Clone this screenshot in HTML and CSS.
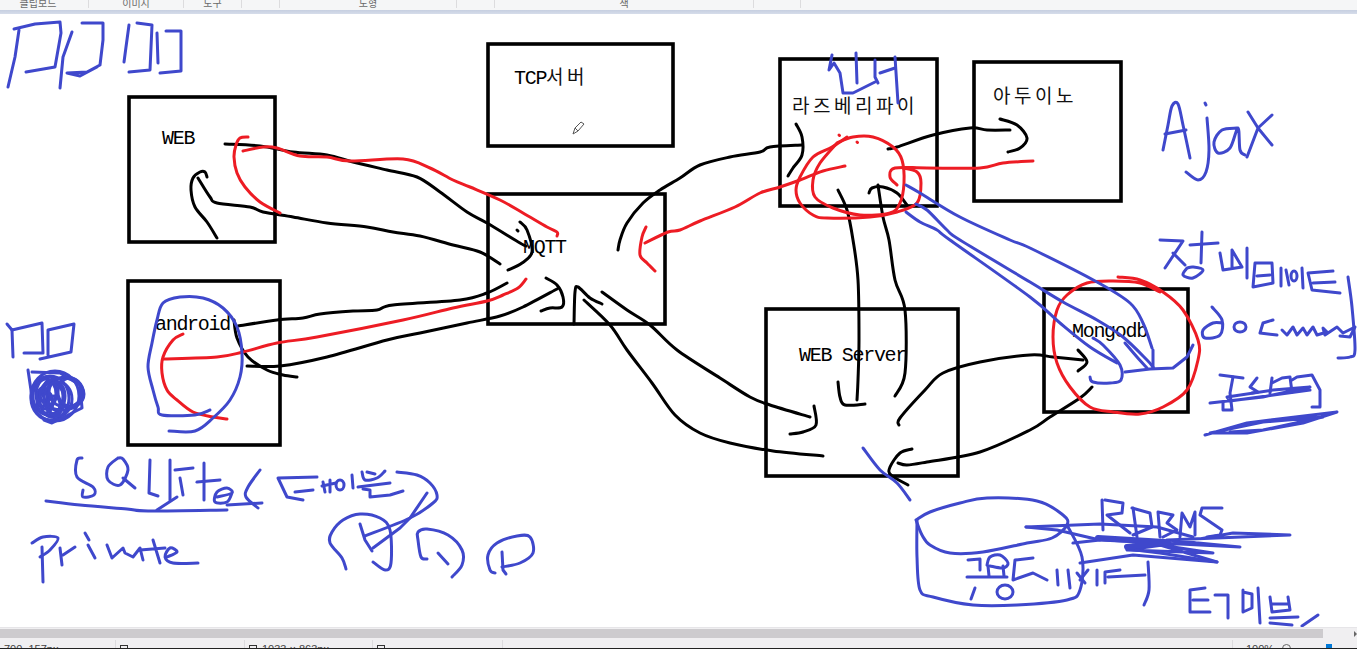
FILE: index.html
```html
<!DOCTYPE html>
<html lang="ko">
<head>
<meta charset="utf-8">
<title>그림판</title>
<link rel="stylesheet" href="styles.css">
</head>
<body>
<div class="app">
  <header class="ribbon">
    <div class="group g-clip"><span>클립보드</span></div>
    <div class="group g-image"><span>이미지</span></div>
    <div class="group g-tools"><span>도구</span></div>
    <div class="group g-brush"></div>
    <div class="group g-shape"><span>도형</span></div>
    <div class="group g-size"></div>
    <div class="group g-color"><span>색</span></div>
    <div class="group g-edit"></div>
  </header>
  <div class="band"></div>
  <main class="canvas">
    <svg class="sheet" viewBox="0 14 1357 613" width="1357" height="613">
      <g class="boxes">
        <rect x="129" y="97" width="146" height="145"/>
        <rect x="128" y="281" width="152" height="164"/>
        <rect x="488" y="44" width="185" height="102"/>
        <rect x="488" y="194" width="177" height="130"/>
        <rect x="780" y="59" width="157" height="147"/>
        <rect x="974" y="62" width="147" height="139"/>
        <rect x="766" y="309" width="192" height="167"/>
        <rect x="1044" y="289" width="144" height="123"/>
      </g>
      <g class="labels">
        <text x="514" y="84">TCP<tspan class="ko">서버</tspan></text>
        <text x="162" y="144">WEB</text>
        <text x="155" y="330">android</text>
        <text x="523" y="253">MQTT</text>
        <text x="799" y="361">WEB Server</text>
        <text x="1072" y="337">Mongodb</text>
        <text class="ko" x="792" y="113">라즈베리파이</text>
        <text class="ko" x="993" y="103">아두이노</text>
      </g>
      <path class="cursor" d="M573 134 L575 128 L581 122 L584 124 L578 131 Z M575 128 L578 131"/>

      <!-- black arrows -->
      <g class="k">
        <path class="curve" d="M225 144 L260 146 293 152 327 155 353 162 387 170 417 177 440 192 467 212 487 223 520 243 526 246"/>
        <path class="curve" d="M207 177 L205 172 200 172 193 178 191 190 195 207 207 222 217 238"/>
        <path class="curve" d="M198 178 L210 197 217 203 250 207 263 212 293 217 327 223 367 227 393 232 420 236 453 245 480 252 500 264"/>
        <path class="curve" d="M520 222 L527 230 532 252 522 263 508 270"/>
        <path d="M517 230 L518 231"/>
        <path class="curve" d="M618 250 L620 240 627 223 643 203 660 190 680 178 700 165 730 157 760 152 770 147 802 145"/>
        <path class="curve" d="M796 124 L802 137 802 155 793 168 788 176"/>
        <path class="curve" d="M888 149 L897 147 933 135 970 128 987 130 1010 130"/>
        <path class="curve" d="M1000 119 L1017 125 1027 138 1020 148 1008 152"/>
        <path class="curve" d="M838 190 L847 210 853 240 858 280 859 340 858 380 857 400"/>
        <path class="curve" d="M838 382 L840 397 845 405 865 404"/>
        <path class="curve" d="M869 193 L872 188 883 187 897 193 907 205"/>
        <path class="curve" d="M878 185 L883 217 889 240 895 280 905 310 905 373 895 396"/>
        <path class="curve" d="M899 425 L900 418 925 390 943 373 980 362 1030 355 1053 357 1083 360"/>
        <path class="curve" d="M1078 350 L1087 362 1078 371"/>
        <path class="curve" d="M1092 387 L1080 398 1050 417 1030 430 980 452 927 462 907 465 898 463"/>
        <path class="curve" d="M912 449 L900 453 890 467 891 475 908 485"/>
        <path class="curve" d="M602 292 L627 310 650 325 677 350 720 378 750 397 770 405 810 417"/>
        <path class="curve" d="M814 406 L816 425 803 432 790 434"/>
        <path class="curve" d="M584 300 L610 325 627 350 652 383 675 415 700 433 730 443 773 451 823 456"/>
        <path class="curve" d="M574 324 L575 292 578 287 590 298 602 304"/>
        <path class="curve" d="M238 326 L277 320 303 318 320 314 353 311 377 310 393 305 460 300 487 293 507 283"/>
        <path class="curve" d="M234 320 L237 338 248 357 267 370 283 375 297 377"/>
        <path class="curve" d="M247 366 L280 366 327 357 387 340 420 333 467 323 500 316 523 307 557 289"/>
        <path class="curve" d="M546 278 L557 285 563 297 562 307 550 308 541 311"/>
      </g>

      <!-- red arrows -->
      <g class="r">
        <path class="curve" d="M248 137 L240 138 236 145 234 157 237 173 245 187 260 202 280 213"/>
        <path class="curve" d="M243 151 L263 147 277 148 300 156 327 157 350 161 403 159 430 168 453 180 470 187 500 200 523 213 547 227 557 232 557 236"/>
        <path class="curve" d="M646 227 L642 237 640 255 647 263 655 271"/>
        <path class="curve" d="M645 243 L668 232 680 230 700 221 735 207 760 193 780 187 800 180 823 171 845 166"/>
        <path class="curve" d="M847 137 L832 147 813 157 800 177 796 190 800 203 813 215 827 218 870 217 897 212 917 203 921 183 917 172 903 168"/>
        <path class="curve" d="M837 143 L820 163 813 180 815 197 833 208 860 215 890 213 900 203 904 183 902 160 893 147 873 137 853 137 837 143"/>
        <path class="curve" d="M897 185 L890 177 895 168 927 168 980 168 1003 163 1033 161"/>
        <path d="M839 135 L839.5 135.5 M857 142 L857.5 142.5"/>
        <path class="curve" d="M1118 277 L1140 280 1163 292 1183 310 1198 340 1198 360 1187 390 1163 407 1140 414 1113 412 1090 407 1070 387 1057 363 1053 337 1057 310 1067 295 1087 283 1113 281 1140 283 1160 292"/>
        <path class="curve" d="M183 334 L173 340 163 357 162 373 167 390 177 400 193 412 213 417 227 419"/>
        <path class="curve" d="M163 359 L217 357 243 352 277 343 317 337 403 320 453 308 487 301 503 295 518 288 526 279"/>
      </g>

      <!-- blue lines and handwriting -->
      <g class="b">
        <path class="curve" d="M906 185 L920 193 960 217 1010 240 1030 248 1097 282 1130 303 1143 323 1152 348"/>
        <path class="curve" d="M916 204 L927 210 947 230 960 240 1030 282 1063 302 1097 320 1123 337 1147 360 1153 367"/>
        <path class="curve" d="M906 212 L920 222 937 230 950 240 1030 297 1060 323 1090 347 1117 363"/>
        <path class="curve" d="M1093 338 L1103 345 1120 365 1121 380 1110 383 1093 382 1090 377"/>
        <path class="curve" d="M1125 343 L1137 357 1147 368"/>
        <path d="M1153 350 L1153 368 M1125 372 L1150 369 1173 368 1187 357 1193 345"/>
        <path class="curve" d="M863 448 L880 470 897 483 910 500"/>
        <path class="curve" d="M210 410 L195 415 162 415 158 407 153 390 148 367 152 343 157 320 163 303 180 297 203 298 223 308 237 327 242 353 240 377 230 400 213 418 195 431 169 431"/>

        <!-- top-left -->
        <path d="M14 29 L35 24 60 22 61 33 55 67 26 72"/>
        <path d="M19 30 L15 57 8 87"/>
        <path d="M82 23 L103 23 103 40 100 65 87 72 67 73 80 76 97 67"/>
        <path d="M72 32 L63 57 60 88"/>
        <path d="M129 25 L126 47 124 62"/>
        <path d="M137 23 L152 25 150 70 129 72"/>
        <path d="M166 31 L181 31 181 71 160 73"/>
        <path d="M157 33 L158 63"/>

        <!-- sensor -->
        <path d="M832 55 L829 70 834 63 840 73 843 93 853 93 875 82"/>
        <path d="M856 53 L857 83"/>
        <path d="M875 60 L875 77 878 83"/>
        <path d="M880 73 L895 68"/>
        <path d="M895 57 L898 103"/>

        <!-- Ajax -->
        <path class="curve" d="M1163 150 L1168 125 1172 106 1178 104 1183 125 1190 158"/>
        <path d="M1165 134 L1186 130"/>
        <path d="M1205 103 L1206 105"/>
        <path class="curve" d="M1207 118 L1209 150 1206 172 1198 180 1186 172"/>
        <path class="curve" d="M1237 128 L1222 130 1214 142 1218 153 1230 148 1238 128 1240 150 1245 155"/>
        <path d="M1248 112 L1258 128 1272 145 M1272 115 L1258 128 1247 157"/>

        <!-- small squares and scribble -->
        <path d="M7 324 L12 330 42 323 43 353 24 353"/>
        <path d="M12 330 L13 357"/>
        <path d="M48 355 L48 330 74 324 71 352 40 359"/>
        <path d="M28 370 L32 397"/>
        <ellipse cx="55" cy="396" rx="24" ry="25"/>
        <ellipse cx="50" cy="398" rx="19" ry="22"/>
        <ellipse cx="48" cy="396" rx="15" ry="19"/>
        <ellipse cx="52" cy="400" rx="12" ry="17"/>
        <ellipse cx="46" cy="394" rx="10" ry="15"/>
        <ellipse cx="50" cy="392" rx="7" ry="12"/>
        <ellipse cx="45" cy="402" rx="8" ry="11"/>
        <ellipse cx="56" cy="396" rx="9" ry="14"/>
        <ellipse cx="43" cy="397" rx="6" ry="9"/>
        <ellipse cx="54" cy="405" rx="6" ry="9"/>
        <ellipse cx="62" cy="394" rx="22" ry="16"/>
        <ellipse cx="66" cy="392" rx="17" ry="15"/>
        <ellipse cx="70" cy="392" rx="12" ry="14"/>
        <ellipse cx="58" cy="399" rx="14" ry="17"/>
        <path d="M32 372 L60 373 80 385 82 408 52 423 44 420"/>

        <!-- SQLite -->
        <path class="curve" d="M82 458 L77 460 77 477 93 487 94 495 83 497 83 490"/>
        <path class="curve" d="M118 458 L108 467 108 480 120 485 128 470 123 459 118 458"/>
        <path d="M123 478 L135 488"/>
        <path d="M150 460 L149 493 158 496"/>
        <path d="M170 460 L170 500"/>
        <path d="M180 478 L183 495"/>
        <path d="M175 470 L193 468"/>
        <path d="M204 463 L204 500"/>
        <path d="M197 482 L220 480"/>
        <path class="curve" d="M217 497 L232 493 227 488 217 492 215 502 227 502 232 493"/>
        <path class="curve" d="M260 470 L248 487 246 497 258 508"/>
        <path class="curve" d="M46 501 L80 505 127 509 148 511 227 510"/>
        <path d="M157 510 L177 497"/>
        <path d="M227 505 L262 503"/>

        <!-- table -->
        <path d="M317 477 L278 478 287 497 303 500"/>
        <path d="M295 492 L313 490"/>
        <path d="M323 482 L325 492"/>
        <path d="M330 480 L330 492 M322 486 L336 483"/>
        <ellipse cx="340" cy="485" rx="4" ry="5"/>
        <path d="M352 475 L353 488"/>
        <path class="curve" d="M362 472 L365 480 377 478 385 471"/>
        <path d="M367 472 L375 474"/>
        <path d="M358 487 L390 483"/>
        <path d="M363 489 L370 490 370 497 390 495 403 491"/>
        <path class="curve" d="M397 472 L417 475 430 483 437 495 433 503 410 518 365 536"/>
        <path d="M427 493 L410 518 400 528 373 548"/>
        <path class="curve" d="M346 569 L342 558 330 543 332 532 343 520 360 514 380 518 390 530 391 563 385 570 373 562"/>
        <path d="M360 524 L365 540 372 551"/>
        <path class="curve" d="M427 559 L421 557 418 540 418 532 427 529 448 535 462 550 462 565 452 577"/>
        <path d="M438 553 L448 564"/>
        <path class="curve" d="M495 573 L490 570 488 555 497 543 517 536 530 537 533 553 520 563 502 567"/>
        <path d="M502 552 L503 570 506 574"/>

        <!-- Private -->
        <path class="curve" d="M32 543 L43 537 58 538 50 550 40 557"/>
        <path d="M42 547 L43 582"/>
        <path d="M60 548 L62 565 M63 555 L75 547"/>
        <path d="M85 533 L89 540 M88 545 L95 558"/>
        <path d="M107 545 L112 558 123 548 125 553 133 557 140 548 143 560"/>
        <path d="M153 540 L160 563 M140 550 L165 548"/>
        <path class="curve" d="M167 557 L177 552 170 548 165 557 173 563 198 563"/>

        <!-- equipment data -->
        <path d="M1160 240 L1183 241 1165 268"/>
        <path d="M1173 253 L1185 265"/>
        <path d="M1202 232 L1201 263"/>
        <path d="M1190 245 L1218 243"/>
        <path class="curve" d="M1187 268 L1183 275 1193 278 1203 270 1193 267 1187 268"/>
        <path d="M1220 253 L1223 270 1242 267 1232 250 M1232 268 L1232 250"/>
        <path d="M1247 248 L1247 278"/>
        <path d="M1272 263 L1255 263 1253 287 1273 283 1272 263 M1257 276 L1270 275"/>
        <path d="M1281 268 L1281 286 M1286 270 L1289 285"/>
        <ellipse cx="1294" cy="276" rx="3" ry="5"/>
        <path d="M1302 268 L1303 288"/>
        <path d="M1333 271 L1308 273 1312 290 1340 293 M1313 283 L1335 282"/>
        <path class="curve" d="M1348 277 L1352 307 1355 350 1350 357 1338 358"/>

        <!-- document -->
        <path class="curve" d="M1212 307 L1222 320 1220 335 1205 338 1203 330 1213 323 1222 323"/>
        <ellipse cx="1240" cy="327" rx="6" ry="5"/>
        <path d="M1273 320 L1263 323 1260 333 1277 335"/>
        <path d="M1282 330 L1287 335 1293 327 1297 335 1303 328 1307 335 1313 327 1317 335 1327 332 1323 328 1325 335 1337 327 1343 333 1355 327 1350 337 1340 336"/>

        <!-- json -->
        <path d="M1220 375 L1243 378"/>
        <path d="M1233 377 L1230 393 1232 410 1223 410 1223 402"/>
        <path d="M1257 378 L1250 387 1258 392 1252 393"/>
        <path d="M1272 378 L1270 393 M1272 383 L1282 378 1290 377 1292 392"/>
        <path d="M1292 380 L1297 377 1312 375 1320 390 1320 407 1312 407"/>
        <path d="M1210 403 L1263 397 1310 387 1273 390 1227 397 1230 401 1310 390"/>
        <path d="M1205 435 L1247 423 1287 418 1337 412 1303 423 1247 433 1210 433 1263 422 1323 417 1263 430 1230 432"/>

        <!-- DB cylinder -->
        <path class="curve" d="M916 520 L930 512 960 503 987 498 1037 501 1063 515 1067 525 1052 538 1027 543 983 552 950 553 930 545 922 535 916 520"/>
        <path class="curve" d="M917 520 L917 557 920 590 933 597 973 605 1017 605 1067 600 1080 590 1082 557 1067 525"/>

        <!-- RDBMS -->
        <path d="M1102 500 L1103 530 M1105 500 L1123 503 1122 513 1107 515 1130 533"/>
        <path d="M1133 508 L1137 537 M1132 508 L1150 513 1152 527 1133 535"/>
        <path d="M1158 512 L1160 537 M1158 512 L1173 515 1167 523 1177 530 1163 537"/>
        <path d="M1180 537 L1182 513 1190 527 1195 512 1195 535"/>
        <path d="M1222 508 L1202 508 1200 515 1222 530 1220 535 1207 537"/>
        <path d="M1026 527 L1100 524 1157 527 1193 537"/>
        <path d="M1026 527 L1057 530 1100 540 1160 543 1240 547 1167 540 1290 535 1233 533 1177 543 1127 550 1213 553 1160 545 1217 562 1133 555 1080 563"/>
        <path d="M1217 562 L1160 553 1127 549"/>
        <path d="M1073 543 L1100 540"/>
        <path class="thick" d="M1098 538 L1165 542 M1127 547 L1168 542"/>

        <!-- shared data -->
        <path d="M968 560 L980 559 980 570 M967 577 L1007 577"/>
        <path class="curve" d="M987 565 L990 557 1000 555 1008 563 1003 568 990 566"/>
        <path d="M988 566 L989 576 M1003 566 L1004 576"/>
        <path d="M975 588 L971 599"/>
        <ellipse cx="1005" cy="592" rx="8" ry="7"/>
        <path d="M1033 558 L1015 560 1013 580 1033 573 1047 580"/>
        <path d="M1057 570 L1058 585"/>
        <path d="M1068 570 L1070 588 M1077 573 L1085 583 M1088 570 L1080 580"/>
        <path d="M1097 570 L1097 585"/>
        <path d="M1120 570 L1105 572 1105 583 M1108 577 L1145 575"/>
        <path class="curve" d="M1148 562 L1149 590 1144 605"/>

        <!-- table, bottom -->
        <path d="M1205 588 L1190 590 1190 612 1210 612 M1193 600 L1208 600"/>
        <path d="M1215 595 L1228 595 1228 618"/>
        <path d="M1243 590 L1243 612 M1243 592 L1252 594 1252 608 1243 612"/>
        <path d="M1258 588 L1260 623"/>
        <path d="M1270 597 L1272 612 1290 610 1288 597 M1272 604 L1288 604"/>
        <path d="M1270 618 L1298 617"/>
        <path d="M1270 623 L1292 625"/>
        <path d="M1302 626 L1318 615"/>
      </g>
    </svg>
  </main>
  <div class="hscroll"><div class="hthumb"></div><div class="hrest"><span class="harrow"></span></div></div>
  <footer class="status">
    <div class="cell c-pos">700, 157px</div>
    <div class="cell c-sel"><i class="mark"></i></div>
    <div class="cell c-size"><i class="mark"></i>1033 × 863px</div>
    <div class="cell c-file"><i class="mark"></i></div>
    <div class="cell c-blank"></div>
    <div class="cell c-zoom">100%<i class="knob"></i><div class="slider"><i class="thumb"></i></div></div>
  </footer>
</div>
<script src="smooth.js"></script>
</body>
</html>
```

FILE: styles.css
```css
* { box-sizing: border-box; }
html, body { margin: 0; height: 100%; overflow: hidden; background: #fff; }
.app {
  width: 1357px;
  height: 649px;
  display: flex;
  flex-direction: column;
  font-family: "Noto Sans CJK KR", "Liberation Sans", sans-serif;
}

/* ribbon, scrolled almost out of the picture */
.ribbon {
  height: 10px;
  flex: none;
  display: flex;
  background: #f5f6f7;
  overflow: hidden;
}
.group {
  flex: none;
  height: 8px;
  display: flex;
  align-items: flex-end;
  justify-content: center;
  border-right: 1px solid #dcdcde;
  font-size: 10px;
  line-height: 12px;
  color: #6a6a6a;
}
.g-clip { width: 89px; padding-right: 12px; }
.g-image { width: 95px; }
.g-tools { width: 58px; }
.g-brush { width: 38px; }
.g-shape { width: 177px; }
.g-size { width: 38px; }
.g-color { width: 259px; }
.g-edit { width: 47px; }
.group span { display: block; margin-bottom: -1px; }
.band { height: 4px; flex: none; background: linear-gradient(#c6cfe0, #d6ddea); }

/* canvas */
.canvas { height: 613px; flex: none; background: #fff; overflow: hidden; }
.sheet { display: block; }
.boxes rect { fill: none; stroke: #000; stroke-width: 3.6; }
.labels text {
  font-family: "Liberation Mono", monospace;
  font-size: 20px;
  letter-spacing: -1.3px;
  fill: #000;
}
.labels .ko {
  font-family: "Noto Sans CJK KR", sans-serif;
  font-size: 19px;
  letter-spacing: 3.5px;
  fill: #111;
}
.cursor { fill: #fff; stroke: #555; stroke-width: 1; stroke-linejoin: round; }
.k path, .r path, .b path, .b ellipse {
  fill: none;
  stroke-width: 3;
  stroke-linecap: round;
  stroke-linejoin: round;
}
.k path { stroke: #000; }
.r path { stroke: #ed1c24; }
.b path, .b ellipse { stroke: #3f48cc; }
.b .thick { stroke-width: 6; }

/* horizontal scrollbar */
.hscroll {
  height: 13px;
  flex: none;
  display: flex;
  background: #f0eff1;
  padding: 1px 0 2px;
  border-top: 1px solid #e6e5e8;
}
.hthumb { width: 1323px; background: #cdcbce; }
.hrest { flex: 1; display: flex; justify-content: flex-end; align-items: center; background: #f0eff1; }
.harrow {
  width: 0; height: 0;
  border-left: 3px solid #666;
  border-top: 3px solid transparent;
  border-bottom: 3px solid transparent;
}

/* status bar, cut off by the edge of the screen */
.status {
  height: 9px;
  flex: none;
  display: flex;
  background: #f0eff1;
  border-bottom: 1px solid #222;
  overflow: hidden;
  font-family: "Liberation Sans", "Noto Sans CJK KR", sans-serif;
  font-size: 11px;
  line-height: 13px;
  color: #444;
}
.cell {
  flex: none;
  height: 100%;
  padding: 3px 0 0 4px;
  white-space: nowrap;
  border-right: 1px solid #dcdbde;
  display: flex;
  gap: 5px;
}
.c-pos { width: 116px; }
.c-sel { width: 129px; }
.c-size { width: 128px; }
.c-file { width: 130px; }
.c-blank { width: 730px; }
.c-zoom { flex: 1; border-right: 0; padding-left: 13px; gap: 8px; }
.mark {
  display: block;
  flex: none;
  width: 8px;
  height: 9px;
  margin-top: 2px;
  border: 1px solid #333;
}
.knob {
  display: block;
  flex: none;
  width: 9px;
  height: 9px;
  margin-top: 1px;
  border: 1px solid #666;
  border-radius: 50%;
}
.slider {
  position: relative;
  width: 62px;
  height: 6px;
  border-bottom: 1px solid #bbb;
}
.thumb {
  position: absolute;
  left: 27px;
  top: 1px;
  width: 6px;
  height: 8px;
  background: #0078d7;
}
```

FILE: smooth.js
```js
// Turns each hand-drawn stroke's sampled points into a smooth curve.
document.querySelectorAll('path.curve').forEach(function (path) {
  var n = path.getAttribute('d').match(/-?[\d.]+/g).map(Number);
  var pts = [];
  for (var i = 0; i < n.length; i += 2) pts.push([n[i], n[i + 1]]);
  var d = 'M' + pts[0][0] + ' ' + pts[0][1];
  for (var j = 0; j < pts.length - 1; j++) {
    var p0 = pts[j - 1] || pts[j], p1 = pts[j], p2 = pts[j + 1], p3 = pts[j + 2] || p2;
    d += 'C' + (p1[0] + (p2[0] - p0[0]) / 6) + ' ' + (p1[1] + (p2[1] - p0[1]) / 6) +
      ' ' + (p2[0] - (p3[0] - p1[0]) / 6) + ' ' + (p2[1] - (p3[1] - p1[1]) / 6) +
      ' ' + p2[0] + ' ' + p2[1];
  }
  path.setAttribute('d', d);
});
```
